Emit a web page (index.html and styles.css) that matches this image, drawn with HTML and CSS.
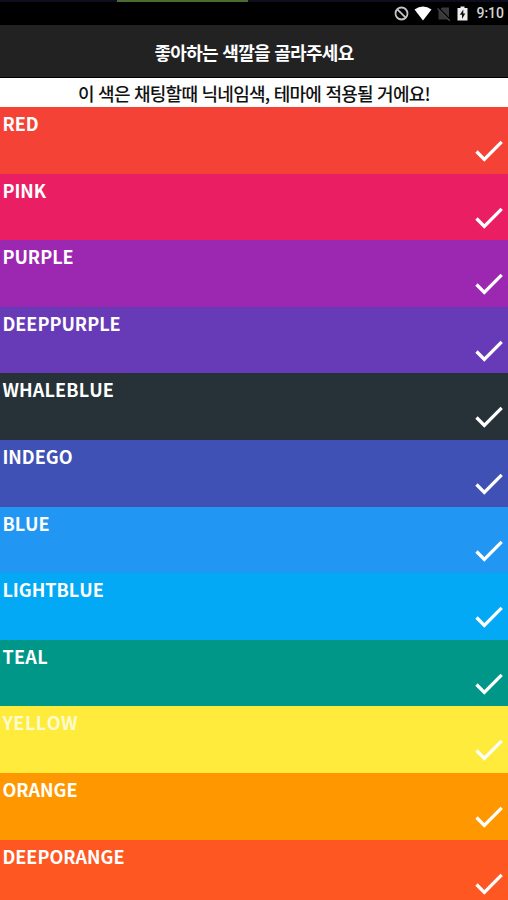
FILE: index.html
```html
<!DOCTYPE html>
<html lang="ko">
<head>
  <meta charset="UTF-8" />
  <meta name="viewport" content="width=device-width, initial-scale=1.0" />
  <title>좋아하는 색깔을 골라주세요</title>
  <link rel="stylesheet" href="styles.css">
</head>
<body>
  <svg class="defs" width="0" height="0">
    <symbol id="check" viewBox="0 0 28 24">
      <path d="M1.5 12.5 L9.3 20.3 L26.7 2.8" fill="none" stroke="#fff" stroke-width="3.3" />
    </symbol>
  </svg>
  <div class="screen">
    <div class="strip"><div class="strip-fill"></div></div>
    <div class="status">
      <svg class="icon-block" width="15" height="15" viewBox="0 0 15 15" fill="none" stroke="#c4c4c4" stroke-width="1.8">
        <circle cx="7.5" cy="7.5" r="6" />
        <path d="M3.3 3.3 L11.7 11.7" />
      </svg>
      <svg class="icon-wifi" width="18" height="15" viewBox="0 0 18 15">
        <path d="M0.5 3.5 Q9 -2.3 17.5 3.5 L9 14.5 Z" fill="#fff" />
      </svg>
      <svg class="icon-sim" width="14" height="15" viewBox="0 0 14 15">
        <path d="M5 1.5 H12 V13.5 H1.5 V5 Z" fill="#393939" />
        <path d="M0.5 1.5 L13.5 14.5" stroke="#000" stroke-width="2.4" />
        <path d="M0.5 2.5 L12.8 14.8" stroke="#4a4a4a" stroke-width="1.3" />
      </svg>
      <svg class="icon-battery" width="11" height="15" viewBox="0 0 11 15">
        <path d="M3.5 0.5 H7.5 V2 H10.5 V14.5 H0.5 V2 H3.5 Z" fill="#eee" />
        <path d="M6.3 3.5 L2.8 8.8 H5 V13 L8.3 7.5 H6.3 Z" fill="#111" />
      </svg>
      <span class="time">9:10</span>
    </div>
    <div class="header">좋아하는 색깔을 골라주세요</div>
    <div class="notice">이 색은 채팅할때 닉네임색, 테마에 적용될 거에요!</div>
    <div class="colors">
      <div class="row red"><span>RED</span><svg class="check"><use href="#check" /></svg></div>
      <div class="row pink"><span>PINK</span><svg class="check"><use href="#check" /></svg></div>
      <div class="row purple"><span>PURPLE</span><svg class="check"><use href="#check" /></svg></div>
      <div class="row deeppurple"><span>DEEPPURPLE</span><svg class="check"><use href="#check" /></svg></div>
      <div class="row whaleblue"><span>WHALEBLUE</span><svg class="check"><use href="#check" /></svg></div>
      <div class="row indego"><span>INDEGO</span><svg class="check"><use href="#check" /></svg></div>
      <div class="row blue"><span>BLUE</span><svg class="check"><use href="#check" /></svg></div>
      <div class="row lightblue"><span>LIGHTBLUE</span><svg class="check"><use href="#check" /></svg></div>
      <div class="row teal"><span>TEAL</span><svg class="check"><use href="#check" /></svg></div>
      <div class="row yellow"><span>YELLOW</span><svg class="check"><use href="#check" /></svg></div>
      <div class="row orange"><span>ORANGE</span><svg class="check"><use href="#check" /></svg></div>
      <div class="row deeporange"><span>DEEPORANGE</span><svg class="check"><use href="#check" /></svg></div>
    </div>
  </div>
</body>
</html>
```
FILE: styles.css
```css
* {
  margin: 0; padding: 0; box-sizing: border-box;
}
body {
  background: #000;
  font-family: "Noto Sans CJK KR", sans-serif;
  overflow: hidden;
}
.defs {
  display: block;
}
.screen {
  width: 508px;
  height: 900px;
  overflow: hidden;
}
.strip {
  height: 2px;
  background: #0d0d20;
}
.strip-fill {
  width: 131px;
  height: 2px;
  margin-left: 117px;
  background: #4b6b30;
}
.status {
  display: flex;
  align-items: center;
  justify-content: flex-end;
  height: 23px;
  padding-right: 4px;
  background: #000;
}
.icon-block {
  margin-right: 5px;
}
.icon-wifi {
  margin-right: 5px;
}
.icon-sim {
  margin-right: 6px;
}
.icon-battery {
  margin-right: 8px;
}
.time {
  font-family: Roboto, sans-serif;
  font-size: 14px;
  font-weight: 500;
  line-height: 25px;
  color: #d4d4d4;
}
.header {
  height: 52px;
  line-height: 55px;
  text-align: center;
  font-size: 18px;
  font-weight: 700;
  letter-spacing: -0.7px;
  color: #fff;
  background: #222;
}
.notice {
  height: 30px;
  border-top: 1px solid #000;
  line-height: 31px;
  text-align: center;
  font-size: 18px;
  font-weight: 500;
  letter-spacing: -0.75px;
  color: #111;
  background: #fff;
}
.row {
  display: flex;
  justify-content: space-between;
  height: 66.6px;
  padding: 3px 5.4px 0 2.4px;
  font-size: 18px;
  font-weight: 700;
  font-kerning: none;
  line-height: 26px;
  color: #fff;
}
.check {
  width: 28px;
  height: 24px;
  margin-top: 29px;
}
.red { background: #f44336; }
.pink { background: #e91e63; }
.purple { background: #9c27b0; }
.deeppurple { background: #673ab7; }
.whaleblue { background: #263238; letter-spacing: 0.15px; }
.indego { background: #3f51b5; }
.blue { background: #2196f3; }
.lightblue { background: #03a9f4; }
.teal { background: #009688; letter-spacing: 0.3px; }
.yellow { background: #ffeb3b; letter-spacing: 0.5px; }
.orange { background: #ff9800; }
.deeporange { background: #ff5722; }
.yellow { color: #fffbd0; }
```
